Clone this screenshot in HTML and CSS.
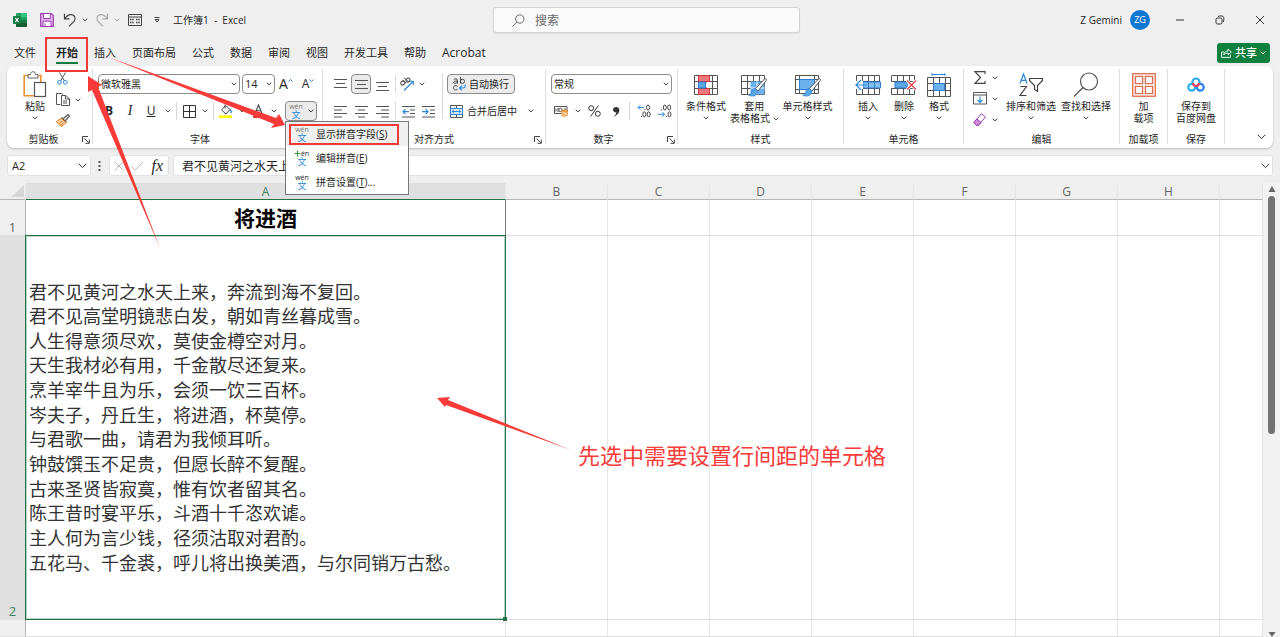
FILE: index.html
```html
<!DOCTYPE html>
<html lang="zh-CN">
<head>
<meta charset="utf-8">
<title>工作簿1 - Excel</title>
<link rel="stylesheet" href="styles.css">
</head>
<body>
<svg class="sprite" aria-hidden="true">
  <symbol id="chev" viewBox="0 0 6 4"><path d="M.8.7 3 2.9 5.2.7" fill="none" stroke="#333" stroke-width="1"/></symbol>
  <symbol id="launch" viewBox="0 0 8 8"><path d="M.5 6V.5H6M2.5 2.5 7 7M7.3 3.5v3.8H3.5" fill="none" stroke="#444" stroke-width="1"/></symbol>
  <symbol id="wen" viewBox="0 0 16 16"><text x="8" y="6" text-anchor="middle" class="wen-latin">wén</text><text x="8" y="15" text-anchor="middle" class="wen-han">文</text></symbol>
  <symbol id="table" viewBox="0 0 24 20"><path d="M.5.5h23v19H.5zM.5 6.5h23M.5 13.5h23M6.5.5v19M12.5.5v19M18.5.5v19" fill="#fff" stroke="#555"/></symbol>
</svg>

<header class="titlebar">
  <div class="quick">
    <svg class="logo" width="14" height="14" viewBox="0 0 14 14"><rect x="3" width="11" height="14" rx="1" fill="#21a366"/><path d="M8 0h5a1 1 0 0 1 1 1v3H8z" fill="#33c481"/><path d="M3 7h11v6a1 1 0 0 1-1 1H4a1 1 0 0 1-1-1z" fill="#185c37"/><path d="M8 7h6v3H8z" fill="#107c41"/><rect y="3" width="8" height="8" rx="1" fill="#107c41"/><path d="m2.3 4.8 3.4 4.4M5.7 4.8 2.3 9.2" stroke="#fff" stroke-width="1.1"/></svg>
    <button class="bare" aria-label="保存"><svg width="14" height="14" viewBox="0 0 14 14"><path d="M.7.7h10.8l1.8 1.8v10.8H.7z" fill="#e3b4ec" stroke="#9b3fb0" stroke-width="1.2"/><path d="M3.5 1v4.5h6.8V1M3 13V8.2h8V13" fill="#fff" stroke="#9b3fb0"/><path d="M5 10.3v3" stroke="#9b3fb0"/></svg></button>
    <button class="bare undo" aria-label="撤销"><svg width="14" height="14" viewBox="0 0 14 14"><path d="M1.5.8v5h5M1.8 5.5C3.5 3 6 1.2 8.7 1.6c3.2.5 4.4 4 2.5 6.5L6 13.3" fill="none" stroke="#444" stroke-width="1.2"/></svg><svg class="chev"><use href="#chev"/></svg></button>
    <button class="bare redo" aria-label="恢复"><svg width="14" height="14" viewBox="0 0 14 14"><path d="M12.5.8v5h-5M12.2 5.5C10.5 3 8 1.2 5.3 1.6c-3.2.5-4.4 4-2.5 6.5L8 13.3" fill="none" stroke="#444" stroke-width="1.2"/></svg><svg class="chev"><use href="#chev"/></svg></button>
    <button class="bare form" aria-label="窗体"><svg width="14" height="12" viewBox="0 0 14 12"><path d="M.5.5h13v11H.5zM.5 3h13" fill="none" stroke="#444"/><path d="M2 5.5h4M2 8.5h4M8 5.5h4M8 8.5h4" stroke="#444" stroke-width="1.6" stroke-dasharray="1.5 .7"/></svg></button>
    <button class="bare more" aria-label="自定义"><svg width="6" height="6" viewBox="0 0 6 6"><path d="M.5.5h5M1 2.500 3 5l2-2.500z" fill="none" stroke="#444"/></svg></button>
    <span class="doc">工作簿1&nbsp; -&nbsp; Excel</span>
  </div>
  <label class="search"><svg width="13" height="13" viewBox="0 0 13 13"><circle cx="7.800" cy="5" r="4.200" fill="none" stroke="#666"/><path d="M4.700 8.200.5 12.500" stroke="#666"/></svg><input type="text" placeholder="搜索" aria-label="搜索"></label>
  <div class="account">
    <span>Z Gemini</span><span class="avatar">ZG</span>
    <button class="bare win" aria-label="最小化"><svg width="10" height="10" viewBox="0 0 10 10"><path d="M1 5h8" stroke="#333"/></svg></button>
    <button class="bare win" aria-label="还原"><svg width="10" height="10" viewBox="0 0 10 10"><rect x="1" y="3" width="6" height="6" rx="1.500" fill="none" stroke="#333"/><path d="M3 1.500C4 .8 8.700.3 8.800 2.500c0 1 .1 3.500-.5 4.500" fill="none" stroke="#333"/></svg></button>
    <button class="bare win" aria-label="关闭"><svg width="10" height="10" viewBox="0 0 10 10"><path d="m1 1 8 8M9 1 1 9" stroke="#333"/></svg></button>
  </div>
</header>

<nav class="tabs">
  <button class="file">文件</button><button class="active">开始</button><button>插入</button><button>页面布局</button><button>公式</button><button>数据</button><button>审阅</button><button>视图</button><button>开发工具</button><button>帮助</button><button class="latin">Acrobat</button>
  <button class="share"><svg width="11" height="10" viewBox="0 0 11 10"><path d="M3 4H.6v5.400h8.800V6.500M2.800 7C3 4 5 3 7 3V1l3.300 3L7 6.700V5C5 5 3.800 5.500 2.800 7z" fill="none" stroke="#fff" stroke-width=".9"/></svg>共享<svg class="chev light" viewBox="0 0 6 4"><path d="M.8.7 3 2.900 5.200.7" fill="none" stroke="#fff"/></svg></button>
</nav>

<section class="ribbon">
  <div class="group clipboard">
    <div class="tools">
      <button class="big"><svg class="pic" width="24" height="28" viewBox="0 0 24 28"><path d="M5.500 4.500H1.200v20.300h9.500M15.500 4.500h2.300V11" fill="none" stroke="#e8912d" stroke-width="1.600"/><path d="M5 7V3.500h2.500C7.500-.2 12.500-.2 12.500 3.500H15V7z" fill="#fff" stroke="#666"/><rect x="11.500" y="11.500" width="11" height="14" fill="#fff" stroke="#555" stroke-width="1.200"/></svg><span>粘贴</span><svg class="chev"><use href="#chev"/></svg></button>
      <div class="stack">
        <button class="bare" aria-label="剪切"><svg width="14" height="13" viewBox="0 0 14 13"><path d="M3.500.5 8.500 9M9.500.5 4.500 9" fill="none" stroke="#555"/><circle cx="3.500" cy="10.300" r="1.900" fill="none" stroke="#2b88d8"/><circle cx="9.300" cy="10.300" r="1.900" fill="none" stroke="#2b88d8"/></svg></button>
        <button class="bare" aria-label="复制"><svg width="14" height="13" viewBox="0 0 14 13"><path d="M4.500 11.500h-4V.5h5l1.500 1M5.500 2.500H10L13.500 6v6.500h-8zM9.500 2.500V6h4M7 8h4M7 10h4" fill="none" stroke="#555"/></svg><svg class="chev"><use href="#chev"/></svg></button>
        <button class="bare" aria-label="格式刷"><svg width="14" height="13" viewBox="0 0 14 13"><path d="M7.500 4.500 12 .5l1.500 1.500L9.500 6.500M5.500 3.500l5 5" fill="none" stroke="#555" stroke-width="1.200"/><path d="M5.300 4.300.5 7.500c1.500 2.500 3.500 4.200 5.500 5l4-4zM3.500 9 6 7.500M5 11l2.500-2.500" fill="#f8cfa0" stroke="#e07b16"/></svg></button>
      </div>
    </div>
    <footer>剪贴板<button class="bare launch" aria-label="剪贴板设置"><svg width="8" height="8"><use href="#launch"/></svg></button></footer>
  </div>

  <div class="group font">
    <div class="tools rows">
      <div class="row">
        <label class="combo family"><select aria-label="字体"><option>微软雅黑</option></select><svg class="chev"><use href="#chev"/></svg></label>
        <label class="combo size"><select aria-label="字号"><option>14</option></select><svg class="chev"><use href="#chev"/></svg></label>
        <button class="bare w22 glyph" aria-label="增大字号">A<svg width="5" height="12" viewBox="0 0 5 12"><path d="m.5 3.500 2-2 2 2" fill="none" stroke="#2b88d8"/></svg></button>
        <button class="bare w22 glyph small" aria-label="减小字号">A<svg width="5" height="12" viewBox="0 0 5 12"><path d="m.5 1.500 2 2 2-2" fill="none" stroke="#2b88d8"/></svg></button>
      </div>
      <div class="row">
        <button class="bare w22 style"><b>B</b></button><button class="bare w20 style"><i>I</i></button><button class="bare w22 style"><u>U</u></button><button class="bare w12" aria-label="下划线样式"><svg class="chev"><use href="#chev"/></svg></button>
        <i class="sep"></i>
        <button class="bare w20" aria-label="边框"><svg width="13" height="13" viewBox="0 0 13 13"><path d="M.5.5h12v12H.5zM6.500.5v12M.5 6.500h12" fill="none" stroke="#333"/></svg></button><button class="bare w12" aria-label="边框样式"><svg class="chev"><use href="#chev"/></svg></button>
        <i class="sep"></i>
        <button class="bare w20" aria-label="填充颜色"><svg width="14" height="15" viewBox="0 0 14 15"><path d="M6.500 1.500 2.500 6 7 10l4-4.500zM6 .5v4" fill="#fff" stroke="#444"/><path d="M11 5c1 1.500 1.700 3 1 4" fill="none" stroke="#2b88d8" stroke-width="1.300"/><path d="M0 11.500h13V14H0z" fill="#ffff00"/></svg></button><button class="bare w12" aria-label="填充选项"><svg class="chev"><use href="#chev"/></svg></button>
        <button class="bare w20" aria-label="字体颜色"><svg width="13" height="15" viewBox="0 0 13 15"><path d="M3 9.500 6.500 1 10 9.500M4.200 6.700h4.600" fill="none" stroke="#444" stroke-width="1.100"/><path d="M1 11.500h11V14H1z" fill="#e83b32"/></svg></button><button class="bare w12" aria-label="字体颜色选项"><svg class="chev"><use href="#chev"/></svg></button>
        <div class="phonetic">
          <button class="pressed wenbtn" aria-label="拼音"><svg width="16" height="16"><use href="#wen"/></svg><svg class="chev"><use href="#chev"/></svg></button>
          <div class="menu" role="menu">
            <button class="hover" role="menuitem"><svg width="16" height="16"><use href="#wen"/></svg><span>显示拼音字段(<u>S</u>)</span></button>
            <button class="dark" role="menuitem"><svg width="16" height="16" viewBox="0 0 16 16"><text x="11" y="6" text-anchor="middle" class="wen-latin">én</text><text x="8" y="15" text-anchor="middle" class="wen-han">文</text><path d="M3.500.5v6M.5 3.500h6" stroke="#2d9c43"/></svg><span>编辑拼音(<u>E</u>)</span></button>
            <button class="dark" role="menuitem"><svg width="16" height="16"><use href="#wen"/></svg><span>拼音设置(<u>T</u>)...</span></button>
          </div>
        </div>
      </div>
    </div>
    <footer>字体</footer>
  </div>

  <div class="group align">
    <div class="tools">
      <div class="rows">
        <div class="row">
          <button class="bare w22" aria-label="顶端对齐"><svg width="13" height="13" viewBox="0 0 13 13"><path d="M0 1.500h13M2 5.500h9M0 9.500h13" stroke="#555"/></svg></button>
          <button class="pressed mid" aria-label="垂直居中"><svg width="13" height="13" viewBox="0 0 13 13"><path d="M0 2.500h13M2 6.500h9M0 10.500h13" stroke="#555"/></svg></button>
          <button class="bare w22" aria-label="底端对齐"><svg width="13" height="13" viewBox="0 0 13 13"><path d="M0 4.500h13M2 8.500h9M0 12.500h13" stroke="#555"/></svg></button>
          <i class="sep"></i>
          <button class="bare orient" aria-label="方向"><svg width="14" height="14" viewBox="0 0 14 14"><g fill="none" stroke="#444"><ellipse cx="2.800" cy="6" rx="2.200" ry="1.800" transform="rotate(-45 2.800 6)"/><path d="m2.800 3 3.200 3.200M4 .5l4.500 4.500"/><ellipse cx="8" cy="3.200" rx="2.200" ry="1.800" transform="rotate(-45 8 3.200)"/></g><path d="M4 13.500 13 4.500M9.500 4.300h3.800v3.800" fill="none" stroke="#2b88d8" stroke-width="1.100"/></svg><svg class="chev"><use href="#chev"/></svg></button>
        </div>
        <div class="row">
          <button class="bare w22" aria-label="左对齐"><svg width="13" height="13" viewBox="0 0 13 13"><path d="M0 1.500h13M0 5h8M0 8.500h13M0 12h8" stroke="#555"/></svg></button>
          <button class="bare w20" aria-label="居中"><svg width="13" height="13" viewBox="0 0 13 13"><path d="M0 1.500h13M3 5h7M0 8.500h13M3 12h7" stroke="#555"/></svg></button>
          <button class="bare w22" aria-label="右对齐"><svg width="13" height="13" viewBox="0 0 13 13"><path d="M0 1.500h13M5 5h8M0 8.500h13M5 12h8" stroke="#555"/></svg></button>
          <i class="sep"></i>
          <button class="bare w20" aria-label="减少缩进"><svg width="13" height="13" viewBox="0 0 13 13"><path d="M0 1.500h13M8 5h5M8 8.500h5M0 12h13" stroke="#555"/><path d="M7 6.700H1M3.500 4.200 1 6.700l2.500 2.500" fill="none" stroke="#2b88d8" stroke-width="1.200"/></svg></button>
          <button class="bare w20" aria-label="增加缩进"><svg width="13" height="13" viewBox="0 0 13 13"><path d="M0 1.500h13M8 5h5M8 8.500h5M0 12h13" stroke="#555"/><path d="M0 6.700h6M3.500 4.200 6 6.700 3.500 9.200" fill="none" stroke="#2b88d8" stroke-width="1.200"/></svg></button>
        </div>
      </div>
      <i class="sep full"></i>
      <div class="rows wrapcol">
        <div class="row"><button class="pressed wrap"><svg width="13" height="14" viewBox="0 0 13 14"><g fill="none" stroke="#444"><path d="M.8 2.600C1.500 1.600 4.500 1.500 4.500 3.500v3M4.500 4C2 4 .600 4.500.7 5.500c.1 1.400 3 1.200 3.800-.5M7.500 0v6.500"/><ellipse cx="9.500" cy="4.300" rx="2" ry="2.100"/><path d="M4.500 9.300c-2-1.500-4-.5-4 1.400s2 3 4 1.500"/></g><path d="M12 7.500c.8 2.500-.5 3.500-2.500 3.500h-3M9 8.700 6.500 11 9 13.300" fill="none" stroke="#2b88d8" stroke-width="1.100"/></svg>自动换行</button></div>
        <div class="row"><button class="bare merge"><svg width="13" height="13" viewBox="0 0 13 13"><path d="M.5.500h12v12H.5zM6.500.5v12" fill="none" stroke="#555"/><rect x=".500" y="3.500" width="12" height="6" fill="#d6eafa" stroke="#2b88d8"/><path d="M2 6.500h9M4 4.800 2.200 6.500 4 8.200M9 4.800l1.800 1.700L9 8.200" fill="none" stroke="#2b88d8"/></svg>合并后居中<svg class="chev"><use href="#chev"/></svg></button></div>
      </div>
    </div>
    <footer>对齐方式<button class="bare launch" aria-label="对齐设置"><svg width="8" height="8"><use href="#launch"/></svg></button></footer>
  </div>

  <div class="group number">
    <div class="tools rows">
      <div class="row"><label class="combo format"><select aria-label="数字格式"><option>常规</option></select><svg class="chev"><use href="#chev"/></svg></label></div>
      <div class="row numrow">
        <button class="bare" aria-label="会计格式"><svg width="14" height="12" viewBox="0 0 14 12"><path d="M.5 1.500h12.500v7H.5zM2 3.500v3M4 3v4M6 3.500v3M11 3v2" fill="none" stroke="#555"/><circle cx="6.500" cy="5" r="1.700" fill="#fff" stroke="#555"/><path d="M7.500 6c0-1.300 6-1.300 6 0v4.200c0 1.300-6 1.300-6 0z" fill="#f2a14b" stroke="#e07b16" stroke-width=".6"/><path d="M7.500 7.500c1 1 5 1 6 0M7.500 9.300c1 1 5 1 6 0" fill="none" stroke="#fff" stroke-width=".7"/></svg></button>
        <button class="bare" aria-label="货币选项"><svg class="chev"><use href="#chev"/></svg></button>
        <button class="bare" aria-label="百分比"><svg width="13" height="12" viewBox="0 0 13 12"><g fill="none" stroke="#333"><circle cx="3.200" cy="3.200" r="2.500"/><circle cx="9.800" cy="8.800" r="2.500"/><path d="M10.500.5 2.500 11.500"/></g></svg></button>
        <button class="bare comma" aria-label="千位分隔"><svg width="8" height="11" viewBox="0 0 8 11"><path d="M7.300 3.500C7.500 7 5 9.500 1.500 10.700 3.500 9 4.300 7.800 4.300 6.300 2.500 6.700 1 5.500 1 3.600 1 .200 7-.200 7.300 3.500z" fill="#333"/></svg></button>
        <i class="sep"></i>
        <button class="bare" aria-label="增加小数位"><svg width="14" height="14" viewBox="0 0 14 14"><g fill="none" stroke="#444"><ellipse cx="11" cy="3.500" rx="1.500" ry="2.500"/><ellipse cx="7.300" cy="10.300" rx="1.500" ry="2.500"/><ellipse cx="11.700" cy="10.300" rx="1.500" ry="2.500"/><path d="M4 12.500h1M7.500 5.500h1"/></g><path d="M7 3.500H1M3.200 1.300 1 3.500l2.200 2.200" fill="none" stroke="#2b88d8"/></svg></button>
        <button class="bare" aria-label="减少小数位"><svg width="14" height="14" viewBox="0 0 14 14"><g fill="none" stroke="#444"><ellipse cx="6.800" cy="3.500" rx="1.500" ry="2.500"/><ellipse cx="11.200" cy="3.500" rx="1.500" ry="2.500"/><ellipse cx="11.500" cy="10.300" rx="1.500" ry="2.500"/><path d="M3 5.800h1M8 12.500h1"/></g><path d="M0 10.300h6.500M4.300 8l2.200 2.300-2.200 2.200" fill="none" stroke="#2b88d8"/></svg></button>
      </div>
    </div>
    <footer>数字<button class="bare launch" aria-label="数字设置"><svg width="8" height="8"><use href="#launch"/></svg></button></footer>
  </div>

  <div class="group styles">
    <div class="tools">
      <button class="big"><svg class="pic" width="25" height="20" viewBox="0 0 25 20"><use href="#table" width="24" height="20"/><path d="M4.500.5h11v6h-11zM4.500 13.500h11v6h-11z" fill="#f4777f" stroke="#d13438"/><path d="M4.500 7h7v6h-7z" fill="#5ba7e6" stroke="#2b7cd3"/><path d="M12 7.500h6v5h-6z" fill="#fff"/></svg><span>条件格式</span><svg class="chev"><use href="#chev"/></svg></button>
      <button class="big"><svg class="pic" width="26" height="24" viewBox="0 0 26 24"><use href="#table" y="2" width="24" height="20"/><path d="M9.500 8.500h14v13h-14z" fill="#6bb1ec"/><path d="M9.500 15h14M16 8.500v13" stroke="#fff"/><path d="m23.500 6-9 9.500 2.500 2.500 8.200-10.500c.8-1.500-.7-2.500-1.700-1.500z" fill="#fff" stroke="#555"/><path d="M14 15.500c-3 0-3 3-3.500 4.500s-2 2-3 2c3 2 9 1.500 9.500-4z" fill="#5ba7e6" stroke="#2b7cd3" stroke-width=".7"/></svg><span>套用<br>表格格式 <svg class="chev"><use href="#chev"/></svg></span></button>
      <button class="big"><svg class="pic" width="26" height="24" viewBox="0 0 26 24"><path d="M.5 2.500h23v18H.5zM4.500 2.500v18M19.500 2.500v18M.5 6.500h23M.5 16.500h23" fill="#fff" stroke="#555"/><path d="M4.500 6.500h15v10h-15z" fill="#6bb1ec" stroke="#2b7cd3"/><path d="m23.500 6-9 9.500 2.500 2.500 8.200-10.500c.8-1.500-.7-2.500-1.700-1.500z" fill="#fff" stroke="#555"/><path d="M14 15.500c-3 0-3 3-3.500 4.500s-2 2-3 2c3 2 9 1.500 9.500-4z" fill="#5ba7e6" stroke="#2b7cd3" stroke-width=".7"/></svg><span>单元格样式</span><svg class="chev"><use href="#chev"/></svg></button>
    </div>
    <footer>样式</footer>
  </div>

  <div class="group cells">
    <div class="tools">
      <button class="big"><svg class="pic" width="26" height="20" viewBox="0 0 26 20"><use href="#table" x="1" width="24" height="20"/><path d="M8 7h17.500v6H8z" fill="#83c0f0" stroke="#2b7cd3"/><path d="M13.500 7v6M19.500 7v6" stroke="#2b7cd3"/><path d="M0 6h8v8H0z" fill="#fff"/><path d="M12 10H1M6 5l-5 5 5 5" fill="none" stroke="#2b88d8" stroke-width="1.200"/></svg><span>插入</span><svg class="chev"><use href="#chev"/></svg></button>
      <button class="big"><svg class="pic" width="26" height="20" viewBox="0 0 26 20"><use href="#table" width="24" height="20"/><path d="M0 7h24v6H0z" fill="#fff"/><path d="M4 7h11l2 3-2 3H4z" fill="#5ba7e6" stroke="#2b7cd3"/><path d="m16 5.500 9 9M25 5.500l-9 9" stroke="#fff" stroke-width="3"/><path d="m16 5.500 9 9M25 5.500l-9 9" stroke="#e8404a" stroke-width="1.200"/></svg><span>删除</span><svg class="chev"><use href="#chev"/></svg></button>
      <button class="big"><svg class="pic" width="24" height="24" viewBox="0 0 24 24"><path d="M5 1.500h13M5 0v3M18 0v3" stroke="#2b88d8"/><use href="#table" y="4" width="24" height="20"/><path d="M6.500 10.500h11v7h-11z" fill="#6bb1ec" stroke="#2b7cd3"/></svg><span>格式</span><svg class="chev"><use href="#chev"/></svg></button>
    </div>
    <footer>单元格</footer>
  </div>

  <div class="group editing">
    <div class="tools">
      <div class="stack">
        <button class="bare" aria-label="求和"><svg width="14" height="13" viewBox="0 0 14 13"><path d="M12 3V.7H2L7.500 6.500 2 12.300h10V10" fill="none" stroke="#444" stroke-width="1.200"/></svg><svg class="chev"><use href="#chev"/></svg></button>
        <button class="bare" aria-label="填充"><svg width="14" height="13" viewBox="0 0 14 13"><path d="M.5.500h13v11.500H.5zM.5 3h13" fill="none" stroke="#555"/><path d="M7 4.500v6M4.500 8 7 10.500 9.500 8" fill="none" stroke="#2b88d8" stroke-width="1.200"/></svg><svg class="chev"><use href="#chev"/></svg></button>
        <button class="bare" aria-label="清除"><svg width="14" height="13" viewBox="0 0 14 13"><path d="M8.500.7 12.500 4 5.500 12.300H3.500L.8 9.500z" fill="#fff" stroke="#9b3fb0"/><path d="M3.800 6 8 9.300l-2.500 3h-2L.8 9.500z" fill="#cf8ddb" stroke="#9b3fb0"/></svg><svg class="chev"><use href="#chev"/></svg></button>
      </div>
      <button class="big"><svg class="pic" width="24" height="24" viewBox="0 0 24 24"><path d="M1 10.500 4.500 1 8 10.500M2.300 7.300h4.400" fill="none" stroke="#2b88d8" stroke-width="1.200"/><path d="M1.500 13.500h6L1 22.500h6.500" fill="none" stroke="#444" stroke-width="1.200"/><path d="M10.500 5.500h13v2l-5 5v6l-3-2v-4l-5-5z" fill="none" stroke="#444" stroke-width="1.200"/></svg><span>排序和筛选</span><svg class="chev"><use href="#chev"/></svg></button>
      <button class="big"><svg class="pic" width="26" height="26" viewBox="0 0 26 26"><circle cx="16" cy="9.500" r="8.500" fill="none" stroke="#555" stroke-width="1.200"/><path d="m10 15.500-9 9" stroke="#555" stroke-width="1.200"/></svg><span>查找和选择</span><svg class="chev"><use href="#chev"/></svg></button>
    </div>
    <footer>编辑</footer>
  </div>

  <div class="group addins">
    <div class="tools"><button class="big"><svg class="pic" width="24" height="24" viewBox="0 0 24 24"><rect x=".7" y=".7" width="22.600" height="22.600" fill="#fbe3da" stroke="#dd6b4d" stroke-width="1.200"/><path d="M3.500 3.500h7v7h-7zM13.500 3.500h7v7h-7zM3.500 13.500h7v7h-7zM13.500 13.500h7v7h-7z" fill="#fff" stroke="#dd6b4d" stroke-width="1.200"/></svg><span>加<br>载项</span></button></div>
    <footer>加载项</footer>
  </div>
  <div class="group save">
    <div class="tools"><button class="big"><svg class="pic" width="18" height="16" viewBox="0 0 18 16"><g fill="none" stroke-width="2.200"><path d="M5.500 7.200V5a3.500 3.500 0 0 1 7 0v2" stroke="#2fa5ee"/><circle cx="4.700" cy="10.300" r="3.400" stroke="#25b3ee"/><circle cx="13.300" cy="10.300" r="3.400" stroke="#2f83ec"/><path d="M6 6c0 2 1.300 3 3 3s3-1 3-3" stroke="#ee4358"/></g></svg><span>保存到<br>百度网盘</span></button></div>
    <footer>保存</footer>
  </div>
  <button class="bare collapse" aria-label="折叠功能区"><svg width="9" height="6" viewBox="0 0 9 6"><path d="m.7.8 3.800 3.800L8.300.8" fill="none" stroke="#333"/></svg></button>
</section>

<section class="formula">
  <label class="box name"><input type="text" value="A2" aria-label="名称框"><svg width="9" height="6" viewBox="0 0 9 6"><path d="m.7.8 3.800 3.800L8.300.8" fill="none" stroke="#333"/></svg></label>
  <svg class="dots" width="3" height="10" viewBox="0 0 3 10"><path d="M.5 0h2v2h-2zM.5 4h2v2h-2zM.5 8h2v2h-2z" fill="#555"/></svg>
  <div class="box fx">
    <button class="bare" aria-label="取消"><svg width="10" height="10" viewBox="0 0 10 10"><path d="m.5.500 9 9M9.500.5l-9 9" stroke="#bbb"/></svg></button>
    <button class="bare" aria-label="输入"><svg width="13" height="10" viewBox="0 0 13 10"><path d="m.7 5.500 3.500 3.500L12.300.7" fill="none" stroke="#bbb"/></svg></button>
    <button class="bare fxb">fx</button>
  </div>
  <label class="box content"><input type="text" value="君不见黄河之水天上来，奔流到海不复回。" aria-label="编辑栏"><svg width="9" height="6" viewBox="0 0 9 6"><path d="m.7.8 3.800 3.800L8.300.8" fill="none" stroke="#333"/></svg></label>
</section>

<main class="sheet">
  <table>
    <colgroup><col class="c-head"><col class="c-a"><col class="c-n"><col class="c-n"><col class="c-n"><col class="c-n"><col class="c-n"><col class="c-n"><col class="c-n"><col></colgroup>
    <thead><tr><th class="corner"><svg width="13" height="12" viewBox="0 0 13 12"><path d="M13 0v12H0z" fill="#d6d6d6"/></svg></th><th class="sel">A</th><th>B</th><th>C</th><th>D</th><th>E</th><th>F</th><th>G</th><th>H</th><th></th></tr></thead>
    <tbody>
      <tr class="r1"><th>1</th><td class="title">将进酒</td><td></td><td></td><td></td><td></td><td></td><td></td><td></td><td></td></tr>
      <tr class="r2"><th class="sel">2</th><td class="poem"><div class="lines"><span>君不见黄河之水天上来，奔流到海不复回。</span><span>君不见高堂明镜悲白发，朝如青丝暮成雪。</span><span>人生得意须尽欢，莫使金樽空对月。</span><span>天生我材必有用，千金散尽还复来。</span><span>烹羊宰牛且为乐，会须一饮三百杯。</span><span>岑夫子，丹丘生，将进酒，杯莫停。</span><span>与君歌一曲，请君为我倾耳听。</span><span>钟鼓馔玉不足贵，但愿长醉不复醒。</span><span>古来圣贤皆寂寞，惟有饮者留其名。</span><span>陈王昔时宴平乐，斗酒十千恣欢谑。</span><span>主人何为言少钱，径须沽取对君酌。</span><span>五花马、千金裘，呼儿将出换美酒，与尔同销万古愁。</span></div></td><td></td><td></td><td></td><td></td><td></td><td></td><td></td><td></td></tr>
      <tr class="r3"><th></th><td></td><td></td><td></td><td></td><td></td><td></td><td></td><td></td><td></td></tr>
    </tbody>
  </table>
  <div class="scroll"><svg width="8" height="7" viewBox="0 0 8 7"><path d="M4 0 7.500 6h-7z" fill="#666"/></svg><div class="thumb"></div><svg class="down" width="8" height="5" viewBox="0 0 8 5"><path d="M.5 0h7L4 5z" fill="#666"/></svg></div>
</main>

<div class="notes">
  <svg width="1280" height="637" viewBox="0 0 1280 637"><g fill="none" stroke="#ee3b38" stroke-width="2"><path d="M46 38h41v33H46zM290 125h108v19H290z"/></g><g fill="#f83a38"><path d="M88 76 102 85 98 87 160 248 92 90 88 92z"/><path d="M285 125 279 114 276 118 108 57 274 124 271 128z"/><path d="M437 398 450 397 448 400 571 450 446 405 445 407z"/></g></svg>
  <p class="callout">先选中需要设置行间距的单元格</p>
</div>
</body>
</html>
```
FILE: styles.css
```css
* { box-sizing: border-box; }
body {
  margin: 0;
  height: 100vh;
  overflow: hidden;
  position: relative;
  display: flex;
  flex-direction: column;
  background: #efefef;
  color: #262626;
  font: 10px/12px "Open Sans", "Noto Sans CJK SC", sans-serif;
}
button, input, select { font: inherit; color: inherit; }
button { padding: 0; border: 0; background: none; }
svg { display: block; flex: none; overflow: visible; }
.sprite { display: none; }
.chev { width: 6px; height: 4px; }
.bare { display: flex; align-items: center; justify-content: center; }

/* title bar */
.titlebar { display: grid; grid-template-columns: 493fr 307fr 480fr; height: 40px; flex: none; align-items: center; }
.quick { display: flex; align-items: center; padding-left: 13px; }
.quick .logo { margin-right: 13px; }
.quick .bare { gap: 5px; margin-right: 9px; }
.quick .undo { margin-right: 7px; }
.quick .redo { opacity: .4; margin-right: 8px; }
.quick .form { margin-right: 12px; }
.quick .more { margin-right: 13px; }
.search { display: flex; align-items: center; gap: 10px; height: 26px; padding-left: 18px; background: #fafafa; border: 1px solid #d4d4d4; border-radius: 3px; box-shadow: 0 1px 1px #ddd; }
.search input { border: 0; background: none; padding: 0; flex: 1; min-width: 0; font-size: 12px; outline: 0; }
.search input::placeholder { color: #6a6a6a; }
.account { display: flex; align-items: center; justify-content: flex-end; padding-right: 15px; }
.avatar { width: 20px; height: 20px; margin: 0 25px 0 8px; border-radius: 50%; background: #0f78d4; color: #fff; font-size: 9px; line-height: 20px; text-align: center; }
.win { margin-right: 30px; }
.win:last-child { margin-right: 0; }

/* tabs */
.tabs { display: flex; align-items: center; gap: 16px; height: 26px; flex: none; padding: 0 10px 0 14px; font-size: 11px; line-height: 16px; }
.tabs .file { margin-right: 4px; }
.tabs .active { position: relative; font-weight: 700; }
.tabs .active::after { content: ""; position: absolute; left: 0; right: 0; bottom: -3px; height: 2px; background: #107c41; }
.tabs .latin { font-size: 12px; }
.tabs .share { display: flex; align-items: center; gap: 3px; margin-left: auto; height: 20px; padding: 0 4px; border-radius: 3px; background: #10803f; color: #fff; font-weight: 500; }

/* ribbon */
.ribbon { display: flex; flex: none; height: 82px; margin: 0 7px; padding-top: 3px; background: #fff; border-radius: 7px; box-shadow: 0 1px 2px #bbb; }
.group { display: flex; flex-direction: column; height: 75px; border-right: 1px solid #dedede; }
.tools { display: flex; height: 63px; }
.group footer { position: relative; text-align: center; height: 12px; line-height: 14px; }
.launch { position: absolute; right: 3px; bottom: 0; }
.big { display: flex; flex-direction: column; align-items: center; padding-bottom: 3px; }
.big .pic { margin: auto 0; }
.big span { white-space: nowrap; }
.big span .chev { display: inline-block; vertical-align: middle; }
.big > .chev { margin: 4px 0 9px; }
.big > span:last-child { min-height: 29px; }
.stack { display: flex; flex-direction: column; gap: 8px; padding-top: 3px; }
.stack .bare { gap: 5px; height: 13px; justify-content: flex-start; }
.rows { display: flex; flex-direction: column; gap: 7px; padding-top: 5px; }
.row { display: flex; align-items: center; height: 20px; }
.w12 { width: 12px; }
.w20 { width: 20px; }
.w22 { width: 22px; }
.sep { width: 1px; height: 18px; margin: 0 2px; background: #d8d8d8; }
.sep.full { height: 46px; margin: 4px 4px 0 0; }
.pressed { display: flex; align-items: center; justify-content: center; height: 20px; border: 1px solid #8a8a8a; border-radius: 4px; background: #ebebeb; }
.combo { display: flex; align-items: center; height: 20px; border: 1px solid #8c8c8c; border-radius: 4px; background: #fff; padding-right: 2px; }
.combo select { appearance: none; border: 0; background: none; padding: 0 2px; flex: 1; min-width: 0; outline: 0; }

.clipboard { width: 86px; }
.clipboard .tools { padding-left: 16px; gap: 9px; }
.clipboard .launch { right: 2px; }
.clipboard footer { padding-right: 12px; }
.font { width: 230px; padding-left: 5px; }
.font footer { padding-right: 20px; }
.family { width: 142px; margin-right: 2px; }
.size { width: 33px; }
.size select { font-size: 11px; }
.glyph { font-size: 14px; }
.glyph.small { font-size: 12px; }
.style { font-size: 12px; }
.style i { font-family: "Liberation Serif", serif; font-size: 14px; }
.phonetic { position: relative; margin-left: 5px; }
.wenbtn { width: 32px; gap: 4px; }
.wen-latin { font: 7px "Open Sans", sans-serif; fill: currentColor; }
.wen-han { font: 9px "Noto Sans CJK SC", sans-serif; fill: #1e8ad6; }
.wenbtn, .menu .hover svg { color: #777; }
.menu { position: absolute; z-index: 2; left: 0; top: 20px; width: 124px; background: #fff; border: 1px solid #777; }
.menu button { display: flex; align-items: center; gap: 6px; width: 100%; height: 24px; padding-left: 8px; white-space: nowrap; }
.menu .hover { background: #f0f0f0; }
.align { width: 223px; }
.align .tools { padding-left: 6px; }
.mid { width: 20px; }
.orient { gap: 5px; margin-left: 2px; }
.align .rows:first-child { width: 113px; }
.wrap { width: 68px; gap: 3px; }
.merge { gap: 4px; padding-left: 3px; }
.merge .chev { margin-left: 7px; }
.number { width: 132px; }
.number .tools { padding-left: 5px; }
.number footer { padding-right: 16px; }
.number .launch { right: 2px; }
.format { width: 121px; }
.numrow { gap: 7px; padding-left: 3px; }
.numrow .sep { margin: 0; }
.numrow .comma { margin: 0 2px 0 4px; }
.styles { width: 166px; }
.styles .tools { padding-left: 8px; gap: 4px; }
.cells { width: 120px; }
.cells .tools { padding-left: 11px; gap: 10px; }
.editing { width: 156px; }
.editing .tools { padding-left: 9px; gap: 5px; }
.editing .stack { margin-right: 3px; padding-top: 2px; }
.addins { width: 48px; }
.save { width: 57px; }
.addins .tools, .save .tools { justify-content: center; }
.collapse { margin: auto 7px 8px auto; }

/* formula bar */
.formula { display: flex; align-items: center; flex: none; height: 35px; padding: 0 7px; }
.box { display: flex; align-items: center; height: 21px; background: #fff; border: 1px solid #e2e2e2; border-radius: 3px; }
.box input { border: 0; background: none; padding: 0; flex: 1; min-width: 0; outline: 0; }
.name { width: 84px; padding: 0 3px 0 4px; }
.name input { font-size: 11px; }
.dots { margin: 0 8px 0 7px; }
.fx { width: 60px; justify-content: space-between; padding: 0 5px 0 4px; }
.fxb { font: italic 16px/18px "Liberation Serif", serif; }
.content { flex: 1; margin-left: 4px; padding: 0 2px 0 8px; }
.content input { font-size: 12px; }

/* sheet */
.sheet { display: flex; flex: 1; min-height: 0; }
table { flex: 1; height: 100%; table-layout: fixed; border-collapse: separate; border-spacing: 0; background: #fff; }
.c-head { width: 26px; }
.c-a { width: 480px; }
.c-n { width: 102px; }
th, td { padding: 0; border-right: 1px solid #e6e6e6; border-bottom: 1px solid #e0e0e0; }
th { background: #efefef; color: #666; font-weight: 400; font-size: 12px; line-height: 15px; }
thead th { height: 17px; border-bottom-color: #b5b5b5; }
thead th.sel { background: #e0e0e0; color: #3f8163; border-bottom: 1px solid #217346; }
.corner svg { margin-left: 11px; }
tbody th { vertical-align: bottom; font-size: 13px; border-right-color: #b5b5b5; }
tbody th.sel { background: #e0e0e0; color: #3f8163; }
.r1 { height: 36px; }
.r2 { height: 384px; }
.title { text-align: center; font-size: 21px; line-height: 24px; font-weight: 700; color: #000; border-right-color: #777; }
.poem { position: relative; color: #333; font-size: 18px; }
.poem::after { content: ""; position: absolute; inset: -1px; border: 1px solid #217346; box-shadow: inset 0 0 0 1px #b9d5c7; }
.poem::before { content: ""; position: absolute; z-index: 1; right: -2px; bottom: -2px; width: 4px; height: 4px; background: #217346; }
.lines { display: grid; grid-auto-rows: 1fr; height: 296px; padding-left: 3px; }
.lines span { line-height: 24px; white-space: nowrap; }
.scroll { display: flex; flex-direction: column; align-items: center; width: 17px; padding-top: 3px; background: #f2f2f2; }
.thumb { width: 7px; height: 238px; margin-top: 3px; border-radius: 4px; background: #737373; }
.scroll .down { margin-top: auto; }

/* annotations over the window */
.notes { position: absolute; inset: 0; z-index: 3; pointer-events: none; overflow: hidden; }
.callout { position: absolute; left: 578px; top: 440px; margin: 0; color: #f83a38; font-size: 22px; line-height: 30px; white-space: nowrap; }
```
